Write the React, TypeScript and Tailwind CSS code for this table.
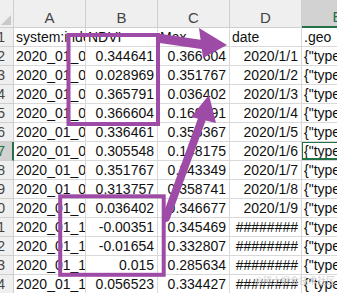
import React from 'react';

const PURPLE = '#9d4ba6';
const GREEN = '#217346';

const rows: string[][] = [
  ['system:index', 'NDVI', 'Max', 'date', '.geo'],
  ['2020_01_01_x', '0.344641', '0.366604', '2020/1/1', '{"type'],
  ['2020_01_02_x', '0.028969', '0.351767', '2020/1/2', '{"type'],
  ['2020_01_03_x', '0.365791', '0.036402', '2020/1/3', '{"type'],
  ['2020_01_04_x', '0.366604', '0.169791', '2020/1/4', '{"type'],
  ['2020_01_05_x', '0.336461', '0.355367', '2020/1/5', '{"type'],
  ['2020_01_06_x', '0.305548', '0.148175', '2020/1/6', '{"type'],
  ['2020_01_07_x', '0.351767', '0.343349', '2020/1/7', '{"type'],
  ['2020_01_08_x', '0.313757', '0.358741', '2020/1/8', '{"type'],
  ['2020_01_09_x', '0.036402', '0.346677', '2020/1/9', '{"type'],
  ['2020_01_10_x', '-0.00351', '0.345469', '########', '{"type'],
  ['2020_01_11_x', '-0.01654', '0.332807', '########', '{"type'],
  ['2020_01_12_x', '0.015', '0.285634', '########', '{"type'],
  ['2020_01_13_x', '0.056523', '0.334427', '########', '{"type'],
];

const cols = ['A', 'B', 'C', 'D', 'E'];
const SELECTED_ROW = 7;

function Annotations() {
  return (
    <svg className="absolute inset-0 pointer-events-none" width={337} height={293} viewBox="0 0 337 293">
      {/* boxes */}
      <rect x={68.5} y={35} width={89.5} height={89} fill="none" stroke={PURPLE} strokeWidth={4} />
      <rect x={60.2} y={196.3} width={103.5} height={78.5} fill="none" stroke={PURPLE} strokeWidth={4} />
      {/* arrow to date */}
      <line x1={157} y1={38} x2={205} y2={45} stroke={PURPLE} strokeWidth={9} />
      <polygon points="199,28 227,45 203,58" fill={PURPLE} />
      {/* arrow up to Max */}
      <line x1={166} y1={218} x2={202} y2={119} stroke={PURPLE} strokeWidth={8} strokeLinecap="round" />
      <polygon points="209,95 191,117 216,123" fill={PURPLE} />
    </svg>
  );
}

export default function App() {
  return (
    <div className="relative w-[337px] h-[293px] overflow-hidden bg-white text-[14px] text-[#111] font-['Liberation_Sans',Arial,sans-serif]">
      <div className="grid grid-cols-[14px_72px_72px_72px_72px_72px] w-max">
        {/* corner */}
        <div className="h-[28px] bg-[#efefef] border-r border-b border-[#cfcfcf] flex items-end justify-end pb-[2px] pr-[2px]">
          <svg width="10" height="10" viewBox="0 0 10 10">
            <polygon points="10,0 10,10 0,10" fill="#c9c9c9" />
          </svg>
        </div>
        {cols.map((c) => (
          <div
            key={c}
            className={
              c === 'E'
                ? 'h-[28px] bg-[#d2d2d2] border-r border-b-2 border-r-[#cfcfcf] border-b-[#217346] flex items-end justify-center pb-[1px] leading-[16px] text-[15px] text-[#217346]'
                : 'h-[28px] bg-[#efefef] border-r border-b border-[#cfcfcf] flex items-end justify-center pb-[1px] leading-[16px] text-[15px] text-[#444]'
            }
          >
            {c}
          </div>
        ))}

        {rows.map((r, i) => {
          const n = i + 1;
          const sel = n === SELECTED_ROW;
          return (
            <React.Fragment key={n}>
              <div
                className={
                  sel
                    ? 'h-[19px] bg-[#d2d2d2] border-b border-b-[#cfcfcf] border-r-2 border-r-[#217346] overflow-hidden flex justify-end pr-[7px] leading-[18px] text-[#217346] whitespace-nowrap'
                    : 'h-[19px] bg-[#efefef] border-r border-b border-[#cfcfcf] overflow-hidden flex justify-end pr-[8px] leading-[18px] text-[#444] whitespace-nowrap'
                }
              >
                {n}
              </div>
              {r.map((v, j) => {
                const numeric = n > 1 && j >= 1 && j <= 3;
                const selected = sel && j === 4;
                return (
                  <div
                    key={j}
                    className={`relative h-[19px] border-r border-b border-[#d9d9d9] overflow-hidden whitespace-nowrap leading-[18px] ${
                      numeric ? 'text-right pr-[3px]' : 'text-left pl-[2px]'
                    }`}
                  >
                    {v}
                    {selected && (
                      <div className="absolute -left-[1px] -top-[1px] right-0 bottom-0 border-2 border-[#217346]" />
                    )}
                  </div>
                );
              })}
            </React.Fragment>
          );
        })}
      </div>

      <Annotations />

      <div className="absolute right-[2px] bottom-[8px] text-[9px] leading-none text-[#cfcfcf] font-['Noto_Sans_CJK_SC',sans-serif]">
        @稀土掘金技术社区
      </div>
    </div>
  );
}
